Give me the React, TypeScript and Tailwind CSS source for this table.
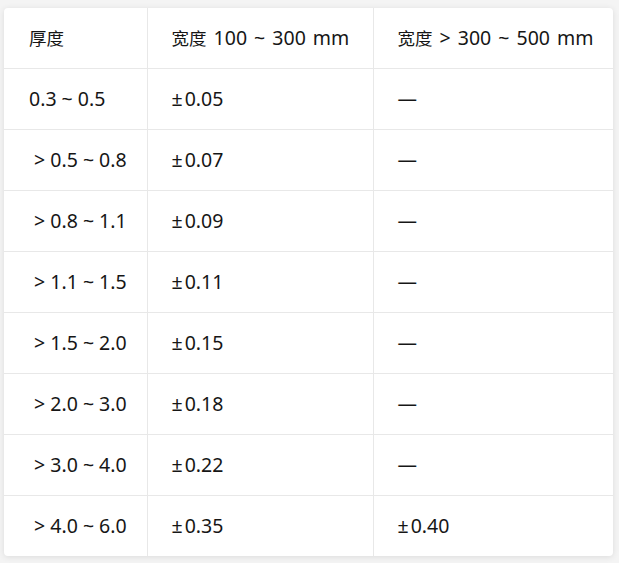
import React from "react";

const rows: [string, string, string][] = [
  ["0.3 ~ 0.5", "0.05", ""],
  [" > 0.5 ~ 0.8", "0.07", ""],
  [" > 0.8 ~ 1.1", "0.09", ""],
  [" > 1.1 ~ 1.5", "0.11", ""],
  [" > 1.5 ~ 2.0", "0.15", ""],
  [" > 2.0 ~ 3.0", "0.18", ""],
  [" > 3.0 ~ 4.0", "0.22", ""],
  [" > 4.0 ~ 6.0", "0.35", "0.40"],
];

const Cjk = ({ children }: { children: React.ReactNode }) => (
  <span className="text-[17.5px]">{children}</span>
);

const PM = ({ v }: { v: string }) => (
  <>
    <span className="mr-[2px]">±</span>
    {v}
  </>
);

export default function App() {
  return (
    <div
      className="min-h-[563px] w-[619px] bg-[#f4f4f4] pl-[4px] pt-[8px]"
      style={{ fontFamily: '"Noto Sans", "Noto Sans CJK SC", sans-serif' }}
    >
      <div className="w-[609px] overflow-hidden rounded-[4px] bg-white shadow-[0_1px_6px_rgba(0,0,0,0.10)]">
        <table className="w-[609px] table-fixed border-collapse text-[19.5px] text-[#161616]">
          <colgroup>
            <col className="w-[143px]" />
            <col className="w-[226px]" />
            <col className="w-[240px]" />
          </colgroup>
          <thead>
            <tr className="h-[60px] border-b border-[#e8e8e8]">
              <th className="pl-[25px] text-left font-normal">
                <Cjk>厚度</Cjk>
              </th>
              <th className="border-l border-[#e8e8e8] pl-[24px] text-left font-normal [word-spacing:2px]">
                <Cjk>宽度</Cjk> 100 ~ 300 mm
              </th>
              <th className="border-l border-[#e8e8e8] pl-[24px] text-left font-normal [word-spacing:2px]">
                <Cjk>宽度</Cjk> &gt; 300 ~ 500 mm
              </th>
            </tr>
          </thead>
          <tbody>
            {rows.map((r, i) => (
              <tr
                key={i}
                className={i < rows.length - 1 ? "h-[61px] border-b border-[#e8e8e8]" : "h-[61px]"}
              >
                <td className="whitespace-pre pl-[25px]">{r[0]}</td>
                <td className="border-l border-[#e8e8e8] pl-[24px]">
                  <PM v={r[1]} />
                </td>
                <td className="border-l border-[#e8e8e8] pl-[24px]">
                  {r[2] ? <PM v={r[2]} /> : "—"}
                </td>
              </tr>
            ))}
          </tbody>
        </table>
      </div>
    </div>
  );
}
